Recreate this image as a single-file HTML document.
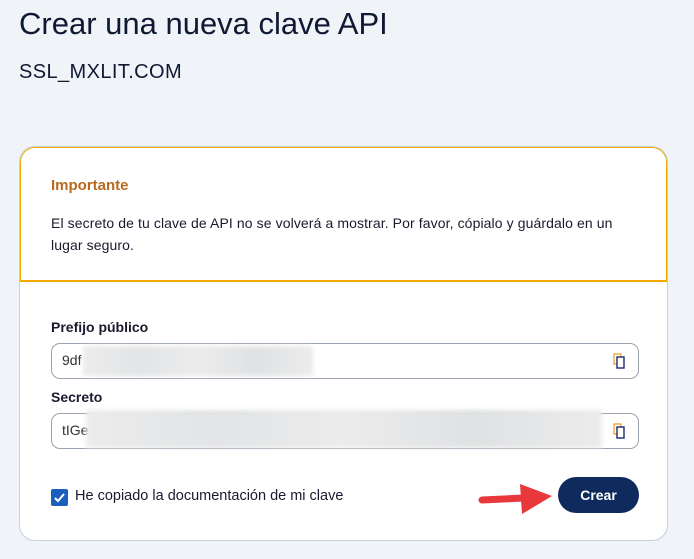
<!DOCTYPE html>
<html><head><meta charset="utf-8"><style>
*{box-sizing:border-box;margin:0;padding:0}
body{width:694px;height:559px;background:#f0f3f7;font-family:"Liberation Sans",sans-serif;color:#0e1a33;position:relative;overflow:hidden}
.a{position:absolute}
h1{position:absolute;left:19px;top:6px;font-size:31px;font-weight:normal;letter-spacing:0;color:#0e1a33}
.sub{left:19px;top:61px;font-size:20px;letter-spacing:0.4px}
.card{left:19px;top:146px;width:649px;height:395px;background:#fff;border:1px solid #c9cfd9;border-radius:16px;overflow:hidden}
.top{position:absolute;left:0;top:0;width:100%;height:135px;border:1.5px solid #f5a800;border-radius:15px 15px 0 0;border-bottom-width:2px}
.imp{left:31px;top:30px;font-size:15px;color:#b86a1f;letter-spacing:0;font-weight:bold}
.txt{left:31px;top:65px;font-size:14px;line-height:22px;width:590px;letter-spacing:0.1px;color:#1a1a2e}
.lbl{font-size:14px;font-weight:bold;letter-spacing:0;color:#1a1a2e}
.inp{left:31px;width:588px;height:36px;border:1px solid #9aa3b0;border-radius:9px;font-size:14px;padding:8px 10px;color:#333}
.blur{position:absolute;background:linear-gradient(90deg,#ececec,#e2e4e6,#ececec,#dfe1e3,#ececec);filter:blur(2px)}
.btn{left:538px;top:330px;width:81px;height:36px;background:#0f2a5c;border-radius:18px;color:#fff;font-weight:bold;font-size:14px;text-align:center;line-height:36px}
.cb{left:31px;top:342px;width:17px;height:17px;background:#1b5fbd;border-radius:2px}
</style></head><body>
<h1>Crear una nueva clave API</h1>
<div class="a sub">SSL_MXLIT.COM</div>
<div class="a card">
 <div class="top"></div>
 <div class="a imp">Importante</div>
 <div class="a txt">El secreto de tu clave de API no se volverá a mostrar. Por favor, cópialo y guárdalo en un lugar seguro.</div>
 <div class="a lbl" style="left:31px;top:172px">Prefijo público</div>
 <div class="a inp" style="top:196px">9df<div class="blur" style="left:31px;top:2px;width:230px;height:30px"></div></div>
 <div class="a lbl" style="left:31px;top:242px">Secreto</div>
 <div class="a inp" style="top:266px">tIGe<div class="blur" style="left:34px;top:-4px;width:516px;height:38px"></div></div>
 <svg class="a" style="left:593px;top:206px" width="14" height="16" viewBox="0 0 14 16"><rect x="1" y="1" width="7" height="10" fill="none" stroke="#f0a030" stroke-width="1.3"/><rect x="4" y="4" width="7" height="11" fill="#fff" stroke="#1a2a6c" stroke-width="1.4"/></svg>
 <svg class="a" style="left:593px;top:276px" width="14" height="16" viewBox="0 0 14 16"><rect x="1" y="1" width="7" height="10" fill="none" stroke="#f0a030" stroke-width="1.3"/><rect x="4" y="4" width="7" height="11" fill="#fff" stroke="#1a2a6c" stroke-width="1.4"/></svg>
 <div class="a cb"><svg width="17" height="17" viewBox="0 0 17 17"><path d="M4 9l3 3 6-7" fill="none" stroke="#fff" stroke-width="2"/></svg></div>
 <div class="a" style="left:55px;top:341px;font-size:14.5px;letter-spacing:0;color:#1a1a2e">He copiado la documentación de mi clave</div>
 <svg class="a" style="left:452px;top:325px" width="86" height="48" viewBox="0 0 86 48"><path d="M10 28 L52 26" stroke="#e8383c" stroke-width="7" stroke-linecap="round"/><path d="M48 12 L80 24 L50 42 Z" fill="#e8383c"/></svg>
 <div class="a btn">Crear</div>
</div>
</body></html>
